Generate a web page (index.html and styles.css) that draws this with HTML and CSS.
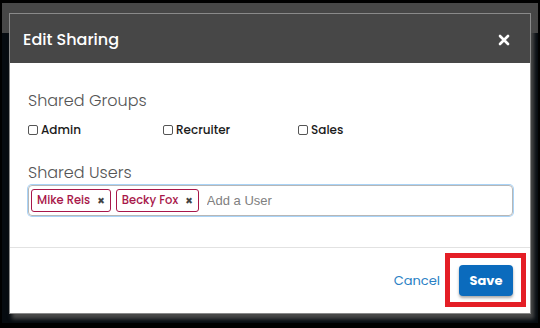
FILE: index.html
```html
<!DOCTYPE html>
<html lang="en">
<head>
  <meta charset="UTF-8" />
  <meta name="viewport" content="width=device-width, initial-scale=1.0"/>
  <title>Edit Sharing</title>
  <link rel="stylesheet" href="styles.css">
</head>
<body>

  <div class="backdrop">
    <div class="modal">

      <!-- Header -->
      <div class="modal-header">
        <h4 class="modal-title">Edit Sharing</h4>
        <button class="close" type="button" aria-label="Close">
          <svg width="12" height="12" viewBox="0 0 12 12">
            <path d="M2 2 L10 10 M10 2 L2 10" stroke="#fff" stroke-width="2.6" stroke-linecap="round"/>
          </svg>
        </button>
      </div>

      <!-- Body -->
      <div class="modal-body">
        <h5 class="section-title">Shared Groups</h5>
        <div class="group-list">
          <label class="check"><input type="checkbox"> Admin</label>
          <label class="check"><input type="checkbox"> Recruiter</label>
          <label class="check"><input type="checkbox"> Sales</label>
        </div>

        <h5 class="section-title">Shared Users</h5>
        <div class="tag-input">
          <span class="tag">Mike Reis <span class="tag-remove">×</span></span>
          <span class="tag">Becky Fox <span class="tag-remove">×</span></span>
          <input class="tag-field" type="text" placeholder="Add a User">
        </div>
      </div>

      <!-- Footer -->
      <div class="modal-footer">
        <a class="btn-link" href="#">Cancel</a>
        <span class="highlight">
          <button class="btn-primary" type="button">Save</button>
        </span>
      </div>

    </div>
  </div>

</body>
</html>
```

FILE: styles.css
```css
body {
  margin: 0;
  padding: 0;
  background-color: #000;
  font-family: Poppins, Inter, sans-serif;
}

.backdrop {
  margin: 3px 2px 0;
  padding: 10px 7px 9px;
  background: linear-gradient(#474747 0 30px, #060b10 30px);
}

.modal {
  width: 522px;
  box-sizing: border-box;
  background-color: #fff;
  border: 1px solid #8a8a8a;
  box-shadow: 3px 5px 4px #4a4a4a;
}

.modal-header {
  height: 49px;
  box-sizing: border-box;
  background-color: #474747;
  display: flex;
  align-items: center;
  justify-content: space-between;
  padding: 2px 20px 0 13px;
}

.modal-title {
  margin: 0;
  color: #fff;
  font-size: 16px;
  font-weight: 500;
}

.close {
  background: none;
  border: 0;
  padding: 0;
  display: flex;
  cursor: pointer;
}

.modal-body {
  padding: 25px 17px 31px 18px;
  border-bottom: 1px solid #e2e2e2;
}

.section-title {
  margin: 0;
  font-size: 16px;
  font-weight: 300;
  color: #555;
}

.group-list {
  display: grid;
  grid-template-columns: 135px 135px 135px;
  margin: 8px 0 21px;
}

.check {
  display: flex;
  align-items: center;
  gap: 3px;
  font-size: 12px;
  line-height: 18px;
  font-weight: 500;
  color: #1a1a1a;
}

.check input {
  appearance: none;
  margin: 0;
  width: 10px;
  height: 10px;
  border: 1px solid #555;
  border-radius: 2px;
}

.tag-input {
  display: flex;
  align-items: center;
  gap: 5px;
  height: 31px;
  box-sizing: border-box;
  padding: 0 2px;
  border: 1px solid #b7b7b7;
  border-radius: 4px;
  box-shadow: 0 0 0 1px #a9d3f7;
}

.tag {
  display: inline-flex;
  align-items: center;
  gap: 7px;
  height: 23px;
  box-sizing: border-box;
  padding: 0 5px;
  border: 1px solid #a8174a;
  border-radius: 3px;
  color: #a8174a;
  font-size: 11.5px;
  font-weight: 500;
}

.tag-remove {
  color: #444;
  font-size: 12px;
  font-weight: 700;
}

.tag-field {
  border: 0;
  outline: 0;
  flex: 1;
  font-family: "Liberation Sans", Arial, sans-serif;
  font-size: 13px;
  padding: 0 3px;
}

.tag-field::placeholder {
  color: #808080;
}

.modal-footer {
  display: flex;
  justify-content: flex-end;
  align-items: center;
  gap: 19px;
  padding: 17px 17px;
}

.btn-link {
  color: #2a7fc4;
  font-size: 13px;
  text-decoration: none;
}

.highlight {
  position: relative;
  display: flex;
}

.highlight::after {
  content: "";
  position: absolute;
  left: -14px;
  right: -13px;
  top: -12px;
  bottom: -11px;
  border: 5px solid #e41e26;
}

.btn-primary {
  width: 54px;
  height: 31px;
  border: 0;
  border-radius: 4px;
  background-color: #0b6bbd;
  color: #fff;
  font-family: inherit;
  font-size: 13px;
  font-weight: 700;
  box-shadow: 0 2px 3px rgba(0, 0, 0, 0.35);
}
```
